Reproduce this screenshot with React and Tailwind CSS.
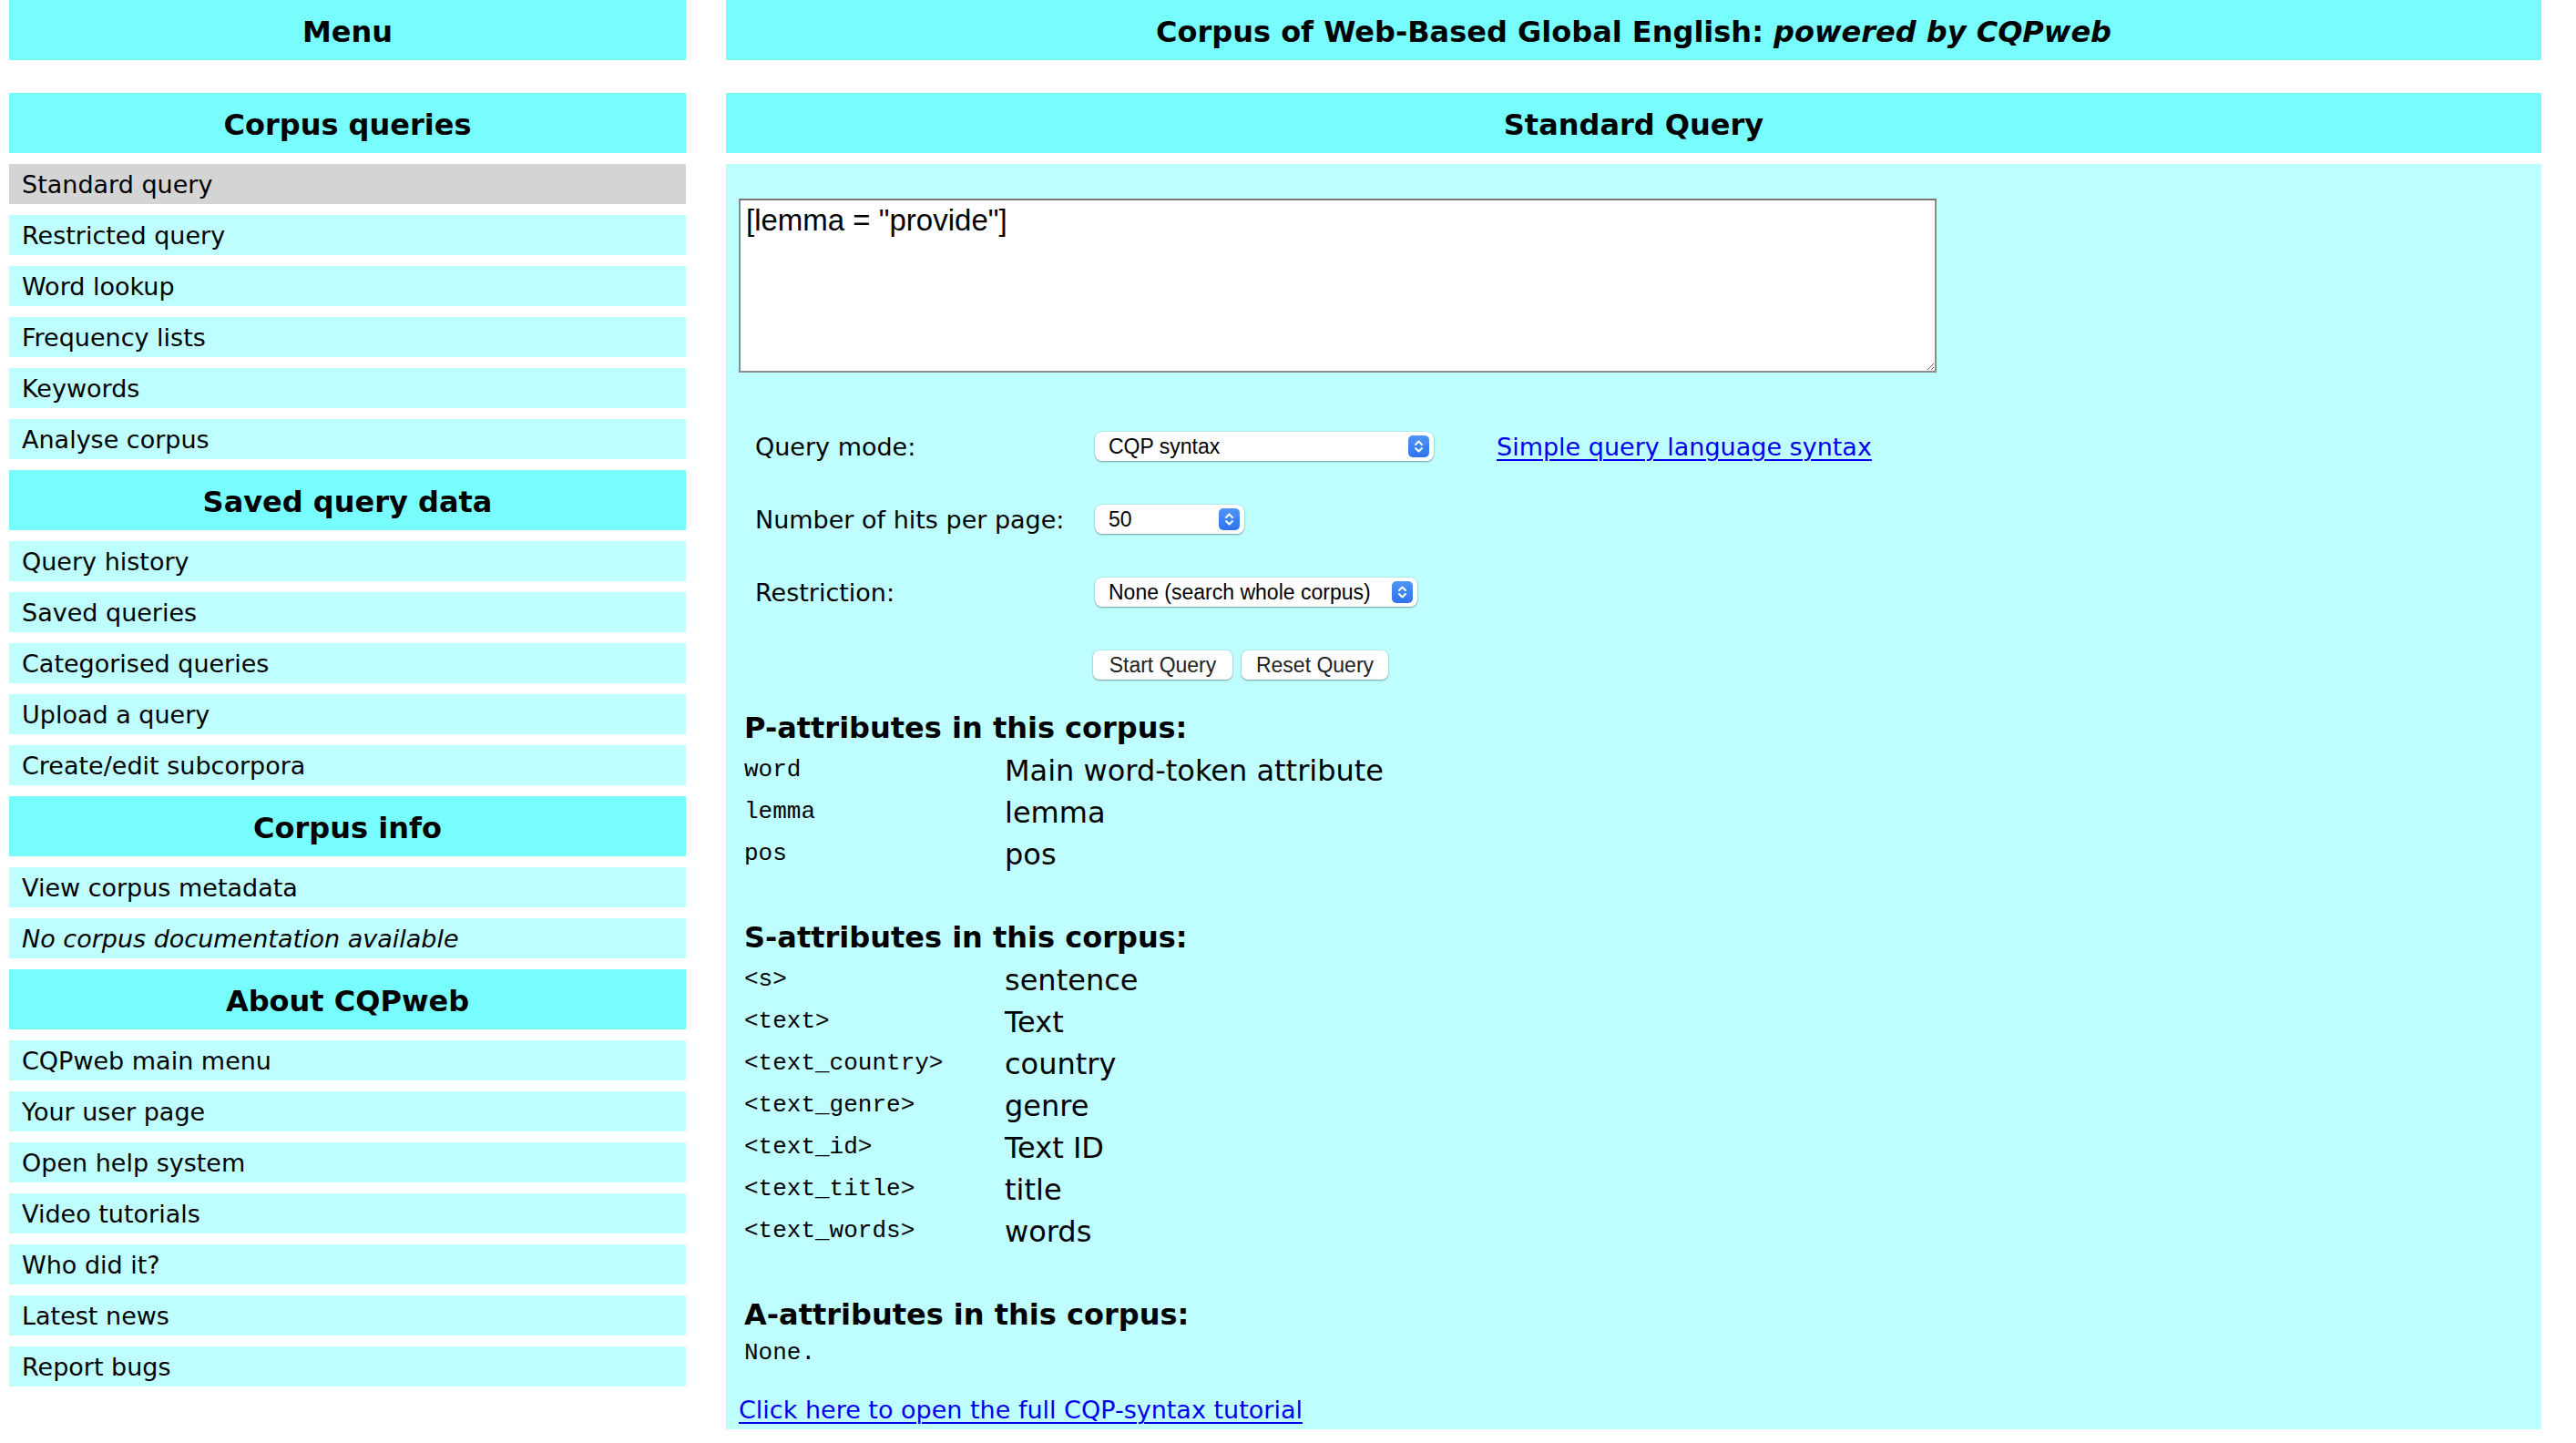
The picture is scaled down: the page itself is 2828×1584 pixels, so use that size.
import React from "react";

function Stepper() {
  return (
    <svg width="23" height="24" viewBox="0 0 23 24" className="shrink-0">
      <defs>
        <linearGradient id="stg" x1="0" y1="0" x2="0" y2="1">
          <stop offset="0" stopColor="#4f94f8" />
          <stop offset="1" stopColor="#2f74ee" />
        </linearGradient>
      </defs>
      <rect x="0" y="0" width="23" height="24" rx="5" fill="url(#stg)" />
      <path d="M8 10 L11.5 6.5 L15 10" fill="none" stroke="#fff" strokeWidth="2" strokeLinecap="round" strokeLinejoin="round" />
      <path d="M8 14 L11.5 17.5 L15 14" fill="none" stroke="#fff" strokeWidth="2" strokeLinecap="round" strokeLinejoin="round" />
    </svg>
  );
}

function FakeSelect({ width, label }) {
  return (
    <div
      className="h-[32px] bg-white rounded-[8px] flex items-center justify-between pl-[15px] pr-[5px] shadow-[0_0_0_1px_rgba(0,0,0,0.05),0_1px_2px_rgba(0,0,0,0.35)] font-['Liberation_Sans'] text-[23px] text-black"
      style={{ width }}
    >
      <span className="leading-none">{label}</span>
      <Stepper />
    </div>
  );
}

function Btn({ children, width }) {
  return (
    <div
      className="h-[32px] bg-white rounded-[7px] flex items-center justify-center shadow-[0_0_0_1px_rgba(0,0,0,0.05),0_1px_2px_rgba(0,0,0,0.35)] font-['Liberation_Sans'] text-[23px] text-[#222]"
      style={{ width }}
    >
      {children}
    </div>
  );
}

const Header = ({ children }) => (
  <div className="h-[66px] pt-[3px] bg-[#77fdfe] flex items-center justify-center font-bold text-[32px] text-black">
    {children}
  </div>
);

const Item = ({ children, active, italic }) => (
  <div
    className={
      "h-[44px] pt-[3px] flex items-center px-[14px] text-[27px] text-black " +
      (active ? "bg-[#d4d4d4]" : "bg-[#befefe]") +
      (italic ? " italic" : "")
    }
  >
    {children}
  </div>
);

const AttrRow = ({ code, desc }) => (
  <div className="h-[46px] pt-[3px] flex items-center">
    <div className="w-[286px] font-['Liberation_Mono'] text-[26px] text-black">{code}</div>
    <div className="text-[32px] text-black">{desc}</div>
  </div>
);

const AttrHead = ({ children, className = "" }) => (
  <div className={"h-[46px] pt-[2px] flex items-center font-bold text-[32px] text-black " + className}>
    {children}
  </div>
);

export default function App() {
  return (
    <div className="w-[2828px] h-[1584px] bg-white flex gap-[44px] pl-[10px] font-['DejaVu_Sans',sans-serif] overflow-hidden">
      {/* Left column */}
      <div className="w-[743px] flex flex-col">
        <Header>Menu</Header>
        <div className="h-[36px]" />
        <div className="flex flex-col gap-[12px]">
          <Header>Corpus queries</Header>
          <Item active>Standard query</Item>
          <Item>Restricted query</Item>
          <Item>Word lookup</Item>
          <Item>Frequency lists</Item>
          <Item>Keywords</Item>
          <Item>Analyse corpus</Item>
          <Header>Saved query data</Header>
          <Item>Query history</Item>
          <Item>Saved queries</Item>
          <Item>Categorised queries</Item>
          <Item>Upload a query</Item>
          <Item>Create/edit subcorpora</Item>
          <Header>Corpus info</Header>
          <Item>View corpus metadata</Item>
          <Item italic>No corpus documentation available</Item>
          <Header>About CQPweb</Header>
          <Item>CQPweb main menu</Item>
          <Item>Your user page</Item>
          <Item>Open help system</Item>
          <Item>Video tutorials</Item>
          <Item>Who did it?</Item>
          <Item>Latest news</Item>
          <Item>Report bugs</Item>
        </div>
      </div>

      {/* Right column */}
      <div className="w-[1993px] flex flex-col">
        <Header>
          <span>
            Corpus of Web-Based Global English: <em>powered by CQPweb</em>
          </span>
        </Header>
        <div className="h-[36px]" />
        <Header>Standard Query</Header>
        <div className="h-[12px]" />
        <div className="bg-[#befefe] pl-[14px] h-[1389px] flex flex-col">
          <textarea
            defaultValue={'[lemma = "provide"]'}
            className="mt-[38px] w-[1315px] h-[191px] bg-white border-2 border-[#8c8c8c] border-t-[#767676] px-[6px] pt-[5px] pb-[4px] leading-[34px] font-['Liberation_Sans'] text-[33px] text-black outline-none"
          />
          <div className="mt-[41px] flex flex-col">
            <div className="h-[80px] flex items-center">
              <div className="w-[391px] pl-[18px] pt-[2px] text-[27px] text-black">Query mode:</div>
              <div className="w-[441px]">
                <FakeSelect width={372} label="CQP syntax" />
              </div>
              <a href="#" className="pt-[2px] text-[27px] text-[#0000ee] underline underline-offset-[4px] decoration-[2px]">
                Simple query language syntax
              </a>
            </div>
            <div className="h-[80px] flex items-center">
              <div className="w-[391px] pl-[18px] pt-[2px] text-[27px] text-black">Number of hits per page:</div>
              <FakeSelect width={164} label="50" />
            </div>
            <div className="h-[80px] flex items-center">
              <div className="w-[391px] pl-[18px] pt-[2px] text-[27px] text-black">Restriction:</div>
              <FakeSelect width={354} label="None (search whole corpus)" />
            </div>
            <div className="h-[80px] flex items-center">
              <div className="w-[389px]" />
              <div className="flex gap-[10px]">
                <Btn width={153}>Start Query</Btn>
                <Btn width={161}>Reset Query</Btn>
              </div>
            </div>
          </div>

          <div className="pl-[6px] flex flex-col">
            <AttrHead className="mt-[5px]">P-attributes in this corpus:</AttrHead>
            <AttrRow code="word" desc="Main word-token attribute" />
            <AttrRow code="lemma" desc="lemma" />
            <AttrRow code="pos" desc="pos" />

            <AttrHead className="mt-[46px]">S-attributes in this corpus:</AttrHead>
            <AttrRow code="<s>" desc="sentence" />
            <AttrRow code="<text>" desc="Text" />
            <AttrRow code="<text_country>" desc="country" />
            <AttrRow code="<text_genre>" desc="genre" />
            <AttrRow code="<text_id>" desc="Text ID" />
            <AttrRow code="<text_title>" desc="title" />
            <AttrRow code="<text_words>" desc="words" />

            <AttrHead className="mt-[46px]">A-attributes in this corpus:</AttrHead>
            <div className="h-[38px] pt-[3px] flex items-center font-['Liberation_Mono'] text-[26px] text-black">None.</div>
          </div>
          <div className="mt-[23px] h-[43px] pt-[2px] flex items-center">
            <a href="#" className="text-[27px] text-[#0000ee] underline underline-offset-[4px] decoration-[2px]">
              Click here to open the full CQP-syntax tutorial
            </a>
          </div>
        </div>
      </div>
    </div>
  );
}
